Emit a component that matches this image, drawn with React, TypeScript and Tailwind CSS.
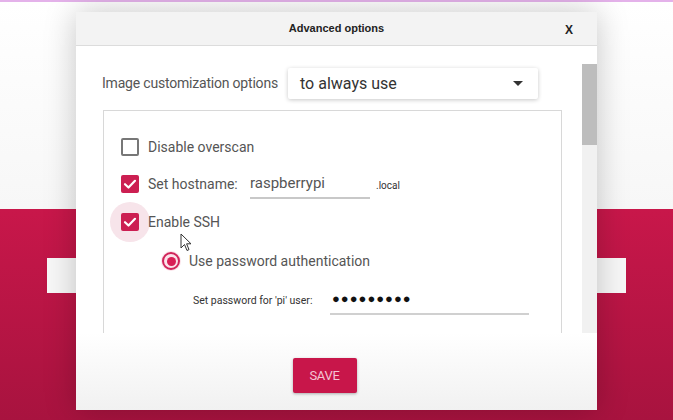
import React from "react";

const Check = () => (
    <svg viewBox="0 0 18 18" className="w-[18px] h-[18px]">
        <path d="M4 9.2 L7.5 12.5 L14 5.8" fill="none" stroke="white" strokeWidth="2.2" strokeLinecap="round" strokeLinejoin="round" />
    </svg>
);

const Cursor = () => (
    <svg viewBox="0 0 12 19" className="w-[12px] h-[19px]">
        <path d="M1 1 L1 15 L4.5 11.5 L7 17.5 L9 16.6 L6.6 10.8 L11 10.8 Z" fill="white" stroke="#333" strokeWidth="1" strokeLinejoin="round" />
    </svg>
);

const App: React.FC = () => {
    return (
        <div className="relative w-[673px] h-[420px] overflow-hidden font-['Roboto',sans-serif]">
            {/* background page */}
            <div className="flex flex-col h-full">
                <div className="h-[2px] bg-[#e4b2ea]"></div>
                <div className="h-[207px] bg-gradient-to-b from-[#ffffff] to-[#f7f7f7]"></div>
                <div className="flex-1 bg-gradient-to-b from-[#c8174a] to-[#a8133f] pt-[49px] px-[47px]">
                    <div className="h-[35px] bg-[#f7f7f7]"></div>
                </div>
            </div>

            {/* dialog */}
            <div className="absolute left-[76px] top-[12px] w-[521px] h-[398px] bg-white flex flex-col shadow-[0_0_30px_rgba(0,0,0,0.22)]">
                <div className="h-[34px] shrink-0 bg-[#f3f3f3] border-b border-[#dcdcdc] flex items-center justify-center relative">
                    <span className="text-[11px] font-bold text-[#222] font-['Liberation_Sans',sans-serif]">Advanced options</span>
                    <span className="absolute right-[24px] top-[9px] text-[12px] font-bold text-[#222] font-['Liberation_Sans',sans-serif]">X</span>
                </div>

                <div className="h-[287px] shrink-0 flex overflow-hidden">
                    <div className="flex-1 flex flex-col pl-[26px] pr-[20px] pt-[22px]">
                        {/* customization row */}
                        <div className="flex items-center h-[31px]">
                            <span className="text-[14px] text-[#555] w-[186px] tracking-[-0.2px]">Image customization options</span>
                            <div className="w-[250px] h-[31px] bg-white shadow-[0_1px_4px_rgba(0,0,0,0.22)] rounded-[2px] flex items-center justify-between pl-[12px] pr-[15px]">
                                <span className="text-[16px] text-[#333]">to always use</span>
                                <svg viewBox="0 0 10 5" className="w-[10px] h-[5px]">
                                    <path d="M0 0 L10 0 L5 5 Z" fill="#333" />
                                </svg>
                            </div>
                        </div>

                        {/* options box */}
                        <div className="relative mt-[11px] ml-[1px] flex-1 border border-b-0 border-[#d8d8d8] pl-[17px] pt-[26px]">
                            <div className="flex items-center h-[20px] gap-[9px]">
                                <div className="w-[18px] h-[18px] border-2 border-[#777] rounded-[2px]"></div>
                                <span className="text-[14px] text-[#555]">Disable overscan</span>
                            </div>

                            <div className="flex items-center h-[20px] gap-[9px] mt-[17px]">
                                <div className="w-[18px] h-[18px] bg-[#cc1f52] rounded-[2px]"><Check /></div>
                                <span className="text-[14px] text-[#555] w-[93px]">Set hostname:</span>
                                <div className="relative w-[120px] h-[20px] flex items-center">
                                    <span className="text-[15px] text-[#555] -mt-[2px]">raspberrypi</span>
                                    <div className="absolute left-0 right-0 top-[23px] h-[2px] bg-[#c8c8c8]"></div>
                                </div>
                                <span className="text-[10px] text-[#333] ml-[-3px] mt-[3px]">.local</span>
                            </div>

                            <div className="flex items-center h-[20px] gap-[9px] mt-[18px]">
                                <div className="relative w-[18px] h-[18px]">
                                    <div className="absolute -left-[11px] -top-[11px] w-[40px] h-[40px] rounded-full bg-[#f7e4ea]"></div>
                                    <div className="relative w-[18px] h-[18px] bg-[#cc1f52] rounded-[2px]"><Check /></div>
                                </div>
                                <span className="relative text-[14px] text-[#555]">Enable SSH</span>
                            </div>

                            <div className="absolute left-[76px] top-[122px]"><Cursor /></div>

                            <div className="flex items-center h-[22px] gap-[8px] mt-[18px] ml-[40px]">
                                <div className="w-[20px] h-[20px] rounded-full bg-[#fbe3ea] flex items-center justify-center">
                                    <div className="w-[18px] h-[18px] rounded-full border-2 border-[#d0245a] flex items-center justify-center">
                                        <div className="w-[9px] h-[9px] rounded-full bg-[#d81f56]"></div>
                                    </div>
                                </div>
                                <span className="text-[14px] text-[#555]">Use password authentication</span>
                            </div>

                            <div className="flex items-center h-[20px] mt-[19px] ml-[72px]">
                                <span className="text-[10.5px] text-[#333] w-[137px]">Set password for 'pi' user:</span>
                                <div className="relative w-[199px] h-[20px]">
                                    <span className="absolute left-[2px] -top-[2px] text-[13px] text-[#111] tracking-[1px]">●●●●●●●●●</span>
                                    <div className="absolute left-0 right-0 top-[22px] h-[2px] bg-[#d0d0d0]"></div>
                                </div>
                            </div>
                        </div>
                    </div>

                    {/* scrollbar */}
                    <div className="w-[15px] shrink-0 mt-[18px] bg-[#f1f1f1] flex flex-col">
                        <div className="h-[81px] bg-[#bdbdbd]"></div>
                    </div>
                </div>

                <div className="flex-1 bg-gradient-to-b from-[#ffffff] to-[#f1f1f1] flex justify-center pr-[24px] pt-[25px]">
                    <div className="w-[64px] h-[35px] bg-[#c8164a] rounded-[2px] shadow-[0_1px_3px_rgba(0,0,0,0.3)] flex items-center justify-center">
                        <span className="text-[13px] text-[#f3c6d3] tracking-[-0.3px]">SAVE</span>
                    </div>
                </div>
            </div>
        </div>
    );
};

export default App;
